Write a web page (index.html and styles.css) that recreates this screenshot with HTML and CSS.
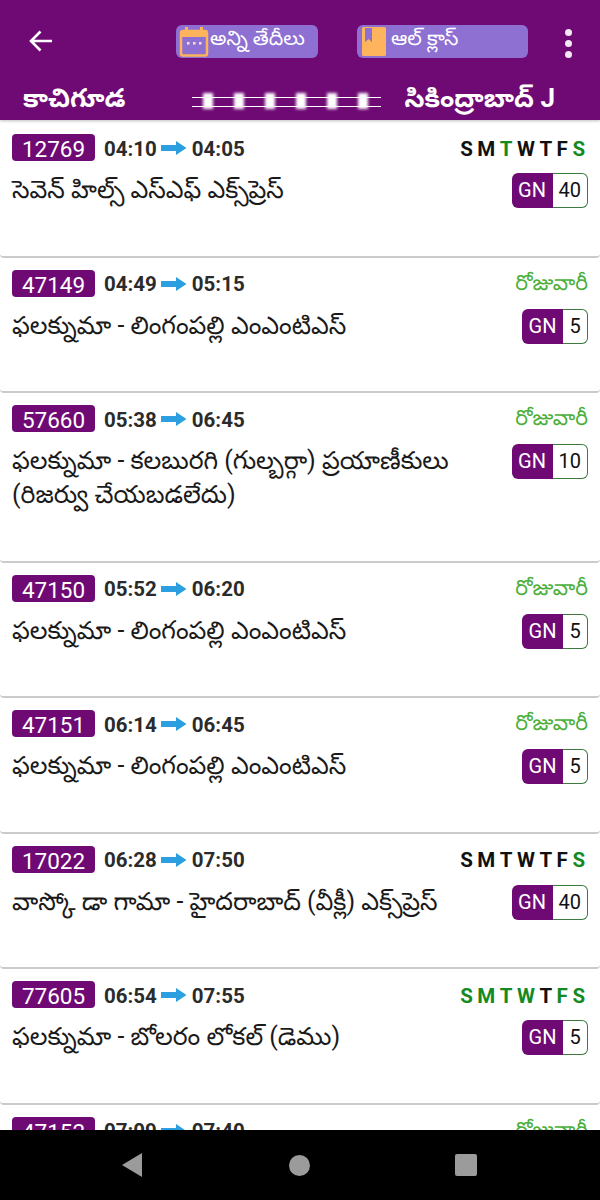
FILE: index.html
```html
<!DOCTYPE html>
<html lang="te">
<head>
<meta charset="utf-8">
<title>రైళ్లు</title>
<link rel="stylesheet" href="styles.css">
</head>
<body>
<div class="screen">
  <header class="appbar">
    <div class="toolbar">
      <svg class="back" width="26" height="24" viewBox="0 0 26 24"><path d="M24 12H3M12.500 2.500 3 12l9.500 9.500" fill="none" stroke="#fff" stroke-width="2.600"/></svg>
      <div class="chip chip-date">
        <svg class="chip-icon" width="30" height="31" viewBox="0 0 30 31"><rect x="2" y="5" width="26" height="24.500" rx="2" fill="#8e6fd2" stroke="#fdb45c" stroke-width="2.500"/><rect x="2" y="5" width="26" height="6" fill="#fdb45c"/><rect x="6" y="1" width="3" height="6" fill="#fdb45c"/><rect x="21" y="1" width="3" height="6" fill="#fdb45c"/><rect x="8" y="16" width="2.500" height="2.500" fill="#fdd"/><rect x="14" y="16" width="2.500" height="2.500" fill="#fdd"/><rect x="20" y="16" width="2.500" height="2.500" fill="#fdd"/></svg>
        <span>అన్ని తేదీలు</span>
      </div>
      <div class="chip chip-class">
        <svg class="chip-icon" width="24" height="29" viewBox="0 0 24 29"><rect width="24" height="29" rx="1.500" fill="#fdb45c"/><path d="M3 1h7v14l-3.500-3L3 15z" fill="#8e6fd2"/></svg>
        <span>ఆల్ క్లాస్</span>
      </div>
      <div class="more"><i></i><i></i><i></i></div>
    </div>
    <div class="route">
      <span class="station">కాచిగూడ</span>
      <div class="rail"><i></i><i></i><i></i><i></i><i></i><i></i></div>
      <span class="station">సికింద్రాబాద్ J</span>
    </div>
  </header>

  <main class="list">
    <article class="card">
      <div class="top"><span class="num">12769</span><b class="time">04:10</b><svg class="arrow" width="26" height="14" viewBox="0 0 26 14"><path d="M0 4h15V0l10.500 7L15 14v-4H0z" fill="#2b9fe0"/></svg><b class="time">04:05</b>
        <span class="days"><b>S</b><b>M</b><b class="g">T</b><b>W</b><b>T</b><b>F</b><b class="g">S</b></span></div>
      <div class="body"><p class="name">సెవెన్ హిల్స్ ఎస్ఎఫ్ ఎక్స్‌ప్రెస్</p><span class="seat"><span class="q">GN</span><span class="n">40</span></span></div>
    </article>
    <article class="card">
      <div class="top"><span class="num">47149</span><b class="time">04:49</b><svg class="arrow" width="26" height="14" viewBox="0 0 26 14"><path d="M0 4h15V0l10.500 7L15 14v-4H0z" fill="#2b9fe0"/></svg><b class="time">05:15</b><span class="daily">రోజువారీ</span></div>
      <div class="body"><p class="name">ఫలక్నుమా - లింగంపల్లి ఎంఎంటిఎస్</p><span class="seat"><span class="q">GN</span><span class="n">5</span></span></div>
    </article>
    <article class="card">
      <div class="top"><span class="num">57660</span><b class="time">05:38</b><svg class="arrow" width="26" height="14" viewBox="0 0 26 14"><path d="M0 4h15V0l10.500 7L15 14v-4H0z" fill="#2b9fe0"/></svg><b class="time">06:45</b><span class="daily">రోజువారీ</span></div>
      <div class="body"><p class="name">ఫలక్నుమా - కలబురగి (గుల్బర్గా) ప్రయాణీకులు (రిజర్వు చేయబడలేదు)</p><span class="seat"><span class="q">GN</span><span class="n">10</span></span></div>
    </article>
    <article class="card">
      <div class="top"><span class="num">47150</span><b class="time">05:52</b><svg class="arrow" width="26" height="14" viewBox="0 0 26 14"><path d="M0 4h15V0l10.500 7L15 14v-4H0z" fill="#2b9fe0"/></svg><b class="time">06:20</b><span class="daily">రోజువారీ</span></div>
      <div class="body"><p class="name">ఫలక్నుమా - లింగంపల్లి ఎంఎంటిఎస్</p><span class="seat"><span class="q">GN</span><span class="n">5</span></span></div>
    </article>
    <article class="card">
      <div class="top"><span class="num">47151</span><b class="time">06:14</b><svg class="arrow" width="26" height="14" viewBox="0 0 26 14"><path d="M0 4h15V0l10.500 7L15 14v-4H0z" fill="#2b9fe0"/></svg><b class="time">06:45</b><span class="daily">రోజువారీ</span></div>
      <div class="body"><p class="name">ఫలక్నుమా - లింగంపల్లి ఎంఎంటిఎస్</p><span class="seat"><span class="q">GN</span><span class="n">5</span></span></div>
    </article>
    <article class="card">
      <div class="top"><span class="num">17022</span><b class="time">06:28</b><svg class="arrow" width="26" height="14" viewBox="0 0 26 14"><path d="M0 4h15V0l10.500 7L15 14v-4H0z" fill="#2b9fe0"/></svg><b class="time">07:50</b>
        <span class="days"><b>S</b><b>M</b><b>T</b><b>W</b><b>T</b><b>F</b><b class="g">S</b></span></div>
      <div class="body"><p class="name">వాస్కో డా గామా - హైదరాబాద్ (వీక్లీ) ఎక్స్‌ప్రెస్</p><span class="seat"><span class="q">GN</span><span class="n">40</span></span></div>
    </article>
    <article class="card">
      <div class="top"><span class="num">77605</span><b class="time">06:54</b><svg class="arrow" width="26" height="14" viewBox="0 0 26 14"><path d="M0 4h15V0l10.500 7L15 14v-4H0z" fill="#2b9fe0"/></svg><b class="time">07:55</b>
        <span class="days"><b class="g">S</b><b class="g">M</b><b class="g">T</b><b class="g">W</b><b>T</b><b class="g">F</b><b class="g">S</b></span></div>
      <div class="body"><p class="name">ఫలక్నుమా - బోలరం లోకల్ (డెము)</p><span class="seat"><span class="q">GN</span><span class="n">5</span></span></div>
    </article>
    <article class="card">
      <div class="top"><span class="num">47152</span><b class="time">07:09</b><svg class="arrow" width="26" height="14" viewBox="0 0 26 14"><path d="M0 4h15V0l10.500 7L15 14v-4H0z" fill="#2b9fe0"/></svg><b class="time">07:40</b><span class="daily">రోజువారీ</span></div>
    </article>
  </main>

  <nav class="navbar">
    <svg width="22" height="26" viewBox="0 0 22 26"><path d="M21 1v24L1 13z" fill="#9b9b9b"/></svg>
    <span class="home"></span>
    <span class="recents"></span>
  </nav>
</div>
</body>
</html>
```

FILE: styles.css
```css
* { box-sizing: border-box; }
html, body { margin: 0; padding: 0; }
body { font-family: Roboto, "Noto Sans Telugu", "Noto Sans", sans-serif; background: #fff; }
.screen { width: 600px; height: 1200px; display: flex; flex-direction: column; overflow: hidden; }

.appbar { height: 120px; flex: none; background: #6f0a75; color: #fff; padding-top: 25px; box-shadow: 0 1px 3px rgba(0,0,0,.25); position: relative; z-index: 1; }
.toolbar { display: flex; align-items: flex-start; height: 33px; padding-left: 28px; }
.back { margin-top: 4px; flex: none; }
.chip { height: 33px; background: #8e6fd2; border-radius: 6px; display: flex; align-items: flex-start; font-size: 20.500px; line-height: 26px; color: #fff; }
.chip-date { width: 142px; margin-left: 122px; padding-left: 3px; gap: 1px; }
.chip-class { width: 171px; margin-left: 39px; padding-left: 5px; gap: 5px; }
.chip-icon { flex: none; margin-top: 2px; }
.chip-date .chip-icon { margin-top: 1px; }
.more { margin-left: 37px; display: flex; flex-direction: column; gap: 4px; padding-top: 4px; }
.more i { width: 7px; height: 7px; border-radius: 50%; background: #f3e9f3; }

.route { display: flex; align-items: center; height: 46px; margin-top: 15px; padding-left: 23px; }
.station { font-size: 26px; font-weight: 700; line-height: 30px; white-space: nowrap; margin-top: 4px; }
.route .station:last-child { margin-left: 24px; }
.rail { width: 189px; height: 16px; margin-left: 66px; margin-top: 10px; flex: none; display: flex; gap: 21px; padding-left: 11px; background: linear-gradient(#fff,#fff) 0 4px/100% 1px no-repeat, linear-gradient(#fff,#fff) 0 13px/100% 1px no-repeat; }
.rail i { width: 10px; height: 16px; background: #fff; filter: blur(1.500px); }

.list { flex: 1 1 auto; min-height: 0; overflow: hidden; padding-top: 2px; }
.card { min-height: 135.500px; padding: 12px 12px 0; border-bottom: 2px solid #cbcbcb; border-radius: 0 0 4px 4px; }
.card:nth-child(3) { min-height: 169.500px; }
.top { display: flex; align-items: center; height: 27px; }
.num { width: 83px; height: 27px; flex: none; background: #6f0a75; color: #fff; border-radius: 4px; font-size: 22.500px; line-height: 30px; text-align: center; margin-right: 9px; }
.time { font-size: 20.500px; font-weight: 700; color: #2b2b2b; line-height: 29px; margin-top: 3px; }
.arrow { margin: 1px 5px 0 4px; flex: none; }
.days { margin-left: auto; display: flex; gap: 4.500px; font-size: 20.500px; line-height: 29px; color: #111; padding-right: 3px; margin-top: 3px; }
.days b { font-weight: 700; }
.days .g { color: #138a22; }
.daily { margin-left: auto; color: #4caf3c; font-size: 21.500px; line-height: 27px; margin-top: -2px; }
.body { display: flex; justify-content: space-between; align-items: flex-start; margin-top: 12px; }
.name { margin: 0; width: 480px; font-size: 25px; line-height: 34px; color: #1a1a1a; }
.seat { flex: none; height: 35px; display: flex; font-size: 20px; line-height: 35px; }
.q { background: #6f0a75; color: #fff; width: 41px; text-align: center; border-radius: 6px 0 0 6px; }
.n { background: #fff; color: #111; min-width: 25px; padding: 0 6px; text-align: center; border: 1.500px solid #3d7a3d; border-left: 0; border-radius: 0 6px 6px 0; line-height: 33px; }

.navbar { height: 70px; flex: none; background: #000; display: flex; align-items: center; padding-left: 121px; position: relative; z-index: 2; }
.home { width: 21px; height: 21px; background: #9b9b9b; border-radius: 50%; margin-left: 146px; }
.recents { width: 22px; height: 22px; background: #9b9b9b; border-radius: 2px; margin-left: 145px; }
```
